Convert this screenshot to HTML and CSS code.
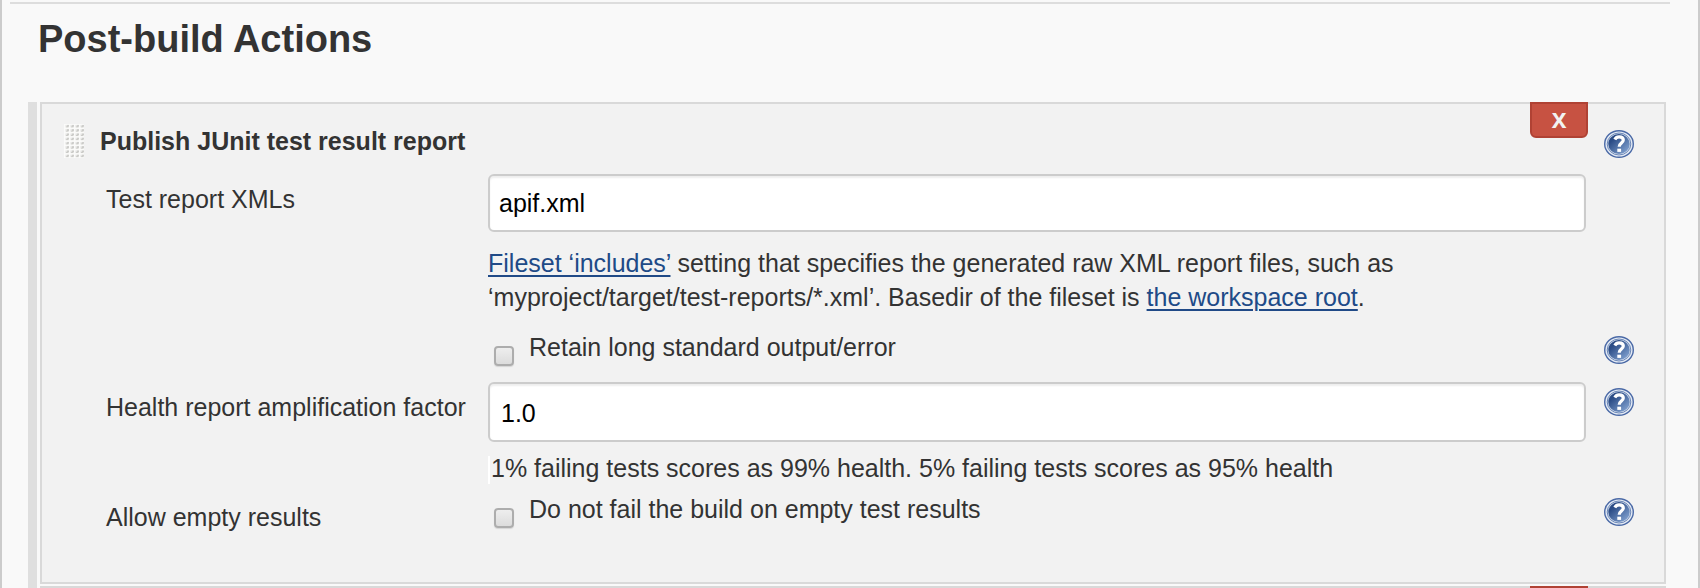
FILE: index.html
```html
<!DOCTYPE html>
<html lang="en">
<head>
<meta charset="utf-8">
<title>Post-build Actions</title>
<link rel="stylesheet" href="styles.css">
</head>
<body>
<svg class="defs" aria-hidden="true">
  <defs>
    <linearGradient id="disc" x1="0" y1="0" x2="1" y2="1">
      <stop offset="0.25" stop-color="#2b4c86"/>
      <stop offset="1" stop-color="#8eaedb"/>
    </linearGradient>
    <pattern id="dots" width="5" height="4.25" patternUnits="userSpaceOnUse">
      <rect width="5" height="4.25" fill="#fbfbfa"/>
      <path d="M1.500 1h3.500v2.500h-3.500z" fill="#e2e2e0"/>
      <path d="M3 1h2v1.500h-1v1h-2v-1h1z" fill="#cbcbc8"/>
    </pattern>
    <symbol id="help" viewBox="0 0 30 28">
      <ellipse cx="15" cy="14" rx="14.3" ry="13.3" fill="#e3eaf4" stroke="#4a69a6" stroke-width="1.400"/>
      <ellipse cx="15" cy="14" rx="11.8" ry="11" fill="#d3ddec" stroke="#6d88b8" stroke-width="1"/>
      <ellipse cx="15" cy="14" rx="10.700" ry="10" fill="url(#disc)"/>
      <path d="M10.800 9.400c1-1.900 2.500-2.600 4.300-2.600 2.500 0 4.200 1.200 4.200 3.300 0 3-4.100 3-4.100 6.700" fill="none" stroke="#fff" stroke-width="3.200"/>
      <rect x="13.300" y="18.700" width="3.800" height="3.200" fill="#fff"/>
    </symbol>
  </defs>
</svg>
<main class="page">
  <hr class="rule">
  <h1 class="heading">Post-build Actions</h1>
  <div class="steps">
    <section class="step">
      <button class="delete" type="button">X</button>
      <header class="row head">
        <svg class="grip" aria-hidden="true"><rect width="20" height="34" fill="url(#dots)"/></svg>
        <h2 class="title">Publish JUnit test result report</h2>
        <button class="help" type="button" aria-label="Help"><svg><use href="#help"/></svg></button>
      </header>
      <div class="row">
        <label class="name" for="xmls">Test report XMLs</label>
        <div class="field">
          <input class="text" id="xmls" type="text" value="apif.xml">
          <p class="note"><a href="#includes">Fileset ‘includes’</a> setting that specifies the generated raw XML report files, such as<br>‘myproject/target/test-reports/*.xml’. Basedir of the fileset is <a href="#root">the workspace root</a>.</p>
        </div>
      </div>
      <div class="row retain">
        <div class="field">
          <label class="check"><input class="box" type="checkbox"><span>Retain long standard output/error</span></label>
        </div>
        <button class="help" type="button" aria-label="Help"><svg><use href="#help"/></svg></button>
      </div>
      <div class="row factor">
        <label class="name" for="factor">Health report amplification factor</label>
        <div class="field">
          <input class="text tall" id="factor" type="text" value="1.0">
          <p class="score">1% failing tests scores as 99% health. 5% failing tests scores as 95% health</p>
        </div>
        <button class="help" type="button" aria-label="Help"><svg><use href="#help"/></svg></button>
      </div>
      <div class="row empty">
        <span class="name">Allow empty results</span>
        <div class="field">
          <label class="check"><input class="box" type="checkbox"><span>Do not fail the build on empty test results</span></label>
        </div>
        <button class="help" type="button" aria-label="Help"><svg><use href="#help"/></svg></button>
      </div>
    </section>
    <section class="step collapsed">
      <button class="delete" type="button" aria-label="Delete"></button>
    </section>
  </div>
</main>
</body>
</html>
```

FILE: styles.css
```css
* { box-sizing: border-box; }
html { height: 100%; }
body {
  height: 100%;
  margin: 0;
  background: #f9f9f9;
  color: #333;
  font: 25px/34px "Liberation Sans", Arial, sans-serif;
}
.defs { position: absolute; width: 0; height: 0; }
.page {
  min-height: 100%;
  padding: 2px 32px 0 8px;
  border: solid #ccc;
  border-width: 0 2px;
}
.rule { margin: 0 -4px 0 0; border: 0; border-top: 2px solid #ddd; }
.heading { margin: 13px 28px 41px; font-size: 38px; line-height: 44px; }
.steps {
  display: grid;
  gap: 2px;
  margin-left: 18px;
  padding-left: 3px;
  border-left: 9px solid #dfdfdf;
}
.step {
  position: relative;
  padding: 20px 30px 48px 22px;
  border: 2px solid #d9d9d9;
  background: #f2f2f2;
}
.delete {
  position: absolute;
  top: -2px;
  right: 76px;
  width: 58px;
  height: 36px;
  padding: 0 0 2px;
  border: 2px solid #b04234;
  border-radius: 0 0 6px 6px;
  background: #c75242;
  color: #f2f2f2;
  font: bold 22px/30px "Noto Sans", sans-serif;
}
.collapsed { padding: 0; border-bottom: 0; }
.collapsed .delete { height: 2px; padding: 0; border-width: 2px 0 0; border-radius: 0; }
.row {
  display: grid;
  grid-template-columns: 382px 1fr 30px;
  align-items: start;
  padding-left: 42px;
}
.head { display: flex; padding-left: 0; height: 50px; }
.grip { flex: none; width: 20px; height: 34px; }
.title { flex: 1; margin: 0 0 0 16px; font-size: 25px; line-height: 34px; }
.help { grid-column: 3; grid-row: 1; width: 30px; height: 28px; padding: 0; border: 0; background: none; }
.head .help { margin-top: 6px; }
.help svg { display: block; width: 30px; height: 28px; }
.name { grid-column: 1; padding-top: 8px; }
.field { grid-column: 2; min-width: 0; padding-right: 18px; }
.text {
  display: block;
  width: 100%;
  height: 58px;
  padding: 0 9px;
  border: 2px solid #ccc;
  border-radius: 6px;
  background: #fff;
  box-shadow: inset 0 2px 2px rgba(0, 0, 0, 0.07);
  color: #000;
  font: inherit;
}
.tall { height: 60px; padding: 2px 11px 0; }
.note { margin: 14px 0 0; }
a { color: #204a87; text-decoration-thickness: 2px; text-underline-offset: 3px; }
.retain { padding-top: 22px; min-height: 68px; }
.check { display: flex; align-items: start; padding-left: 6px; gap: 15px; margin-top: -6px; }
.box {
  appearance: none;
  width: 20px;
  height: 20px;
  margin: 16px 0 0;
  border: 2px solid #adadad;
  border-radius: 4px;
  background: linear-gradient(#eee, #dcdcdc);
  box-shadow: 0 1px 1px rgba(0, 0, 0, 0.12);
}
.factor .help { margin-top: 6px; }
.score {
  margin: 14px 0;
  padding: 0 0 4px 1px;
  border-left: 2px solid #fff;
  line-height: 24px;
}
.empty .name { padding-top: 2px; }
```
